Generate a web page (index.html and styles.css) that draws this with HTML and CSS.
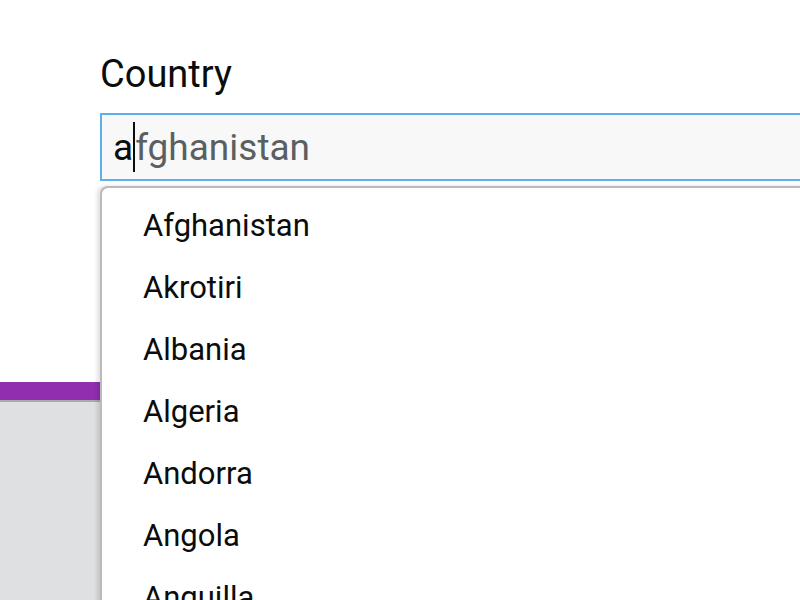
FILE: index.html
```html
<!DOCTYPE html>
<html lang="en">
<head>
<meta charset="utf-8">
<title>Country</title>
<link rel="stylesheet" href="styles.css">
</head>
<body>
<div class="page">
  <section class="top">
    <div class="field">
      <label class="label" for="country">Country</label>
      <div class="input-wrap">
        <div class="input" id="country"><span class="typed">a</span><span class="caret"></span><span class="hint">fghanistan</span></div>
        <ul class="menu">
          <li>Afghanistan</li>
          <li>Akrotiri</li>
          <li>Albania</li>
          <li>Algeria</li>
          <li>Andorra</li>
          <li>Angola</li>
          <li>Anguilla</li>
        </ul>
      </div>
    </div>
  </section>
  <div class="bar"></div>
  <section class="grey"></section>
</div>
</body>
</html>
```
FILE: styles.css
```css
html, body {
  margin: 0;
  padding: 0;
  background: #ffffff;
  overflow: hidden;
}
.page {
  width: 800px;
  height: 600px;
  display: flex;
  flex-direction: column;
  font-family: Roboto, "Liberation Sans", sans-serif;
  color: #0b0c0c;
  overflow: hidden;
}
.top {
  height: 382px;
  padding: 51px 0 0 100px;
  box-sizing: border-box;
  position: relative;
  z-index: 2;
}
.label {
  display: block;
  font-size: 38px;
  line-height: 46px;
  margin: 0 0 16px 0;
}
.input-wrap {
  position: relative;
  width: 720px;
}
.input {
  height: 68px;
  box-sizing: border-box;
  border: 2px solid #5eb0ea;
  background: #f8f8f8;
  display: flex;
  align-items: center;
  padding-left: 11px;
  font-size: 37px;
}
.typed { color: #0b0c0c; }
.hint { color: #5a5f62; }
.caret {
  width: 2px;
  height: 50px;
  background: #0b0c0c;
}
.menu {
  position: absolute;
  left: 0;
  top: 73px;
  width: 740px;
  height: 430px;
  margin: 0;
  padding: 7px 0 0 0;
  list-style: none;
  background: #ffffff;
  border: 2px solid #b8babc;
  border-right: none;
  border-bottom: none;
  border-radius: 8px 0 0 0;
  box-shadow: -3px 0 4px rgba(0,0,0,0.12);
  overflow: hidden;
  box-sizing: border-box;
}
.menu li {
  padding-left: 41px;
  font-size: 31px;
  line-height: 62px;
  height: 62px;
}
.bar {
  height: 18px;
  background: #912eb0;
  border-bottom: 2px solid #a4acaf;
}
.grey {
  flex: 1;
  background: #dee0e2;
}
```
